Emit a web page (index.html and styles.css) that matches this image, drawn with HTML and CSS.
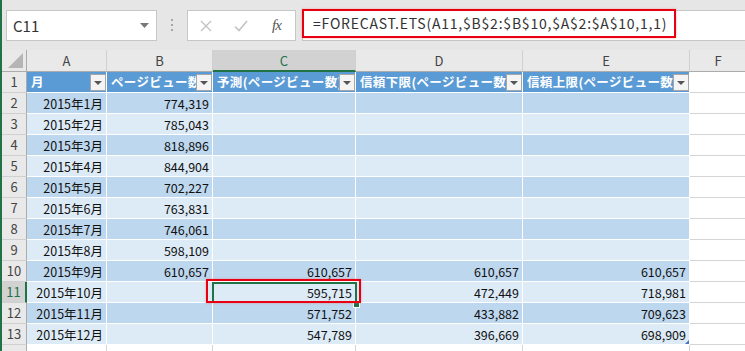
FILE: index.html
```html
<!DOCTYPE html>
<html>
<head>
    <title>FORECAST.ETS</title>
    <link rel="stylesheet" href="styles.css">
</head>
<body>
    <div class="app">
        <div class="formula-bar">
            <div class="name-box">
                <span>C11</span>
                <svg class="caret" width="9" height="5" viewBox="0 0 9 5"><path d="M0 0h9L4.5 5z" fill="#777"/></svg>
            </div>
            <div class="grip">
                <svg width="3" height="13" viewBox="0 0 3 13"><rect x="0" y="0" width="2" height="2" fill="#a6a6a6"/><rect x="0" y="5" width="2" height="2" fill="#a6a6a6"/><rect x="0" y="10" width="2" height="2" fill="#a6a6a6"/></svg>
            </div>
            <div class="fx-box">
                <svg width="12" height="12" viewBox="0 0 12 12"><path d="M1 1l10 10M11 1L1 11" stroke="#c3c3c3" stroke-width="1.4"/></svg>
                <svg width="14" height="12" viewBox="0 0 14 12"><path d="M1 6.5l4 4L13 1" stroke="#c3c3c3" stroke-width="1.6" fill="none"/></svg>
                <span class="fx">fx</span>
            </div>
            <div class="formula">
                <span class="formula-text">=FORECAST.ETS(A11,$B$2:$B$10,$A$2:$A$10,1,1)</span>
            </div>
        </div>

        <div class="sheet">
            <div class="cell corner"><span class="tri"></span></div>
            <div class="cell col-head">A</div>
            <div class="cell col-head">B</div>
            <div class="cell col-head active">C</div>
            <div class="cell col-head">D</div>
            <div class="cell col-head">E</div>
            <div class="cell col-head">F</div>

            <div class="cell row-head">1</div>
            <div class="cell th"><span class="label">月</span><span class="filter"></span></div>
            <div class="cell th"><span class="label">ページビュー数</span><span class="filter"></span></div>
            <div class="cell th"><span class="label">予測(ページビュー数)</span><span class="filter"></span></div>
            <div class="cell th"><span class="label">信頼下限(ページビュー数)</span><span class="filter"></span></div>
            <div class="cell th"><span class="label">信頼上限(ページビュー数)</span><span class="filter"></span></div>
            <div class="cell"></div>

            <div class="cell row-head">2</div>
            <div class="cell band1 num">2015年1月</div>
            <div class="cell band1 num">774,319</div>
            <div class="cell band1 num"></div>
            <div class="cell band1 num"></div>
            <div class="cell band1 num"></div>
            <div class="cell"></div>

            <div class="cell row-head">3</div>
            <div class="cell band2 num">2015年2月</div>
            <div class="cell band2 num">785,043</div>
            <div class="cell band2 num"></div>
            <div class="cell band2 num"></div>
            <div class="cell band2 num"></div>
            <div class="cell"></div>

            <div class="cell row-head">4</div>
            <div class="cell band1 num">2015年3月</div>
            <div class="cell band1 num">818,896</div>
            <div class="cell band1 num"></div>
            <div class="cell band1 num"></div>
            <div class="cell band1 num"></div>
            <div class="cell"></div>

            <div class="cell row-head">5</div>
            <div class="cell band2 num">2015年4月</div>
            <div class="cell band2 num">844,904</div>
            <div class="cell band2 num"></div>
            <div class="cell band2 num"></div>
            <div class="cell band2 num"></div>
            <div class="cell"></div>

            <div class="cell row-head">6</div>
            <div class="cell band1 num">2015年5月</div>
            <div class="cell band1 num">702,227</div>
            <div class="cell band1 num"></div>
            <div class="cell band1 num"></div>
            <div class="cell band1 num"></div>
            <div class="cell"></div>

            <div class="cell row-head">7</div>
            <div class="cell band2 num">2015年6月</div>
            <div class="cell band2 num">763,831</div>
            <div class="cell band2 num"></div>
            <div class="cell band2 num"></div>
            <div class="cell band2 num"></div>
            <div class="cell"></div>

            <div class="cell row-head">8</div>
            <div class="cell band1 num">2015年7月</div>
            <div class="cell band1 num">746,061</div>
            <div class="cell band1 num"></div>
            <div class="cell band1 num"></div>
            <div class="cell band1 num"></div>
            <div class="cell"></div>

            <div class="cell row-head">9</div>
            <div class="cell band2 num">2015年8月</div>
            <div class="cell band2 num">598,109</div>
            <div class="cell band2 num"></div>
            <div class="cell band2 num"></div>
            <div class="cell band2 num"></div>
            <div class="cell"></div>

            <div class="cell row-head">10</div>
            <div class="cell band1 num">2015年9月</div>
            <div class="cell band1 num">610,657</div>
            <div class="cell band1 num">610,657</div>
            <div class="cell band1 num">610,657</div>
            <div class="cell band1 num">610,657</div>
            <div class="cell"></div>

            <div class="cell row-head active">11</div>
            <div class="cell band2 num">2015年10月</div>
            <div class="cell band2 num"></div>
            <div class="cell band2 num current">595,715<span class="sel"><span class="handle"></span></span><span class="mark"></span></div>
            <div class="cell band2 num">472,449</div>
            <div class="cell band2 num">718,981</div>
            <div class="cell"></div>

            <div class="cell row-head">12</div>
            <div class="cell band1 num">2015年11月</div>
            <div class="cell band1 num"></div>
            <div class="cell band1 num">571,752</div>
            <div class="cell band1 num">433,882</div>
            <div class="cell band1 num">709,623</div>
            <div class="cell"></div>

            <div class="cell row-head">13</div>
            <div class="cell band2 num">2015年12月</div>
            <div class="cell band2 num"></div>
            <div class="cell band2 num">547,789</div>
            <div class="cell band2 num">396,669</div>
            <div class="cell band2 num last">698,909<span class="resize"></span></div>
            <div class="cell"></div>

            <div class="cell row-head"></div>
            <div class="cell"></div>
            <div class="cell"></div>
            <div class="cell"></div>
            <div class="cell"></div>
            <div class="cell"></div>
            <div class="cell"></div>
        </div>
    </div>
</body>
</html>
```

FILE: styles.css
```css
body {
    margin: 0;
    font-family: "Noto Sans CJK JP", sans-serif;
}
.app {
    width: 745px;
    height: 351px;
    overflow: hidden;
    box-sizing: border-box;
    border-left: 2px solid #217346;
    background: #fff;
}

/* formula bar */
.formula-bar {
    height: 50px;
    box-sizing: border-box;
    padding-top: 10px;
    display: flex;
    align-items: flex-start;
    background: #e6e6e6;
}
.name-box {
    margin-left: 4px;
    width: 151px;
    height: 31px;
    box-sizing: border-box;
    border: 1px solid #c6c6c6;
    background: #fff;
    display: flex;
    align-items: center;
    justify-content: space-between;
    padding: 0 7px 0 6px;
    font-size: 15px;
    color: #333;
}
.grip {
    width: 30px;
    height: 31px;
    display: flex;
    align-items: center;
    justify-content: center;
}
.fx-box {
    width: 109px;
    height: 31px;
    box-sizing: border-box;
    border: 1px solid #c6c6c6;
    background: #fff;
    display: flex;
    align-items: center;
    gap: 22px;
    padding-left: 12px;
}
.fx {
    font-family: "Liberation Serif", serif;
    font-style: italic;
    font-size: 15px;
    color: #555;
    letter-spacing: -1px;
    margin-left: 2px;
}
.formula {
    flex: 1;
    margin-left: 6px;
    height: 31px;
    box-sizing: border-box;
    border: 1px solid #c6c6c6;
    border-right: none;
    background: #fff;
}
.formula-text {
    display: block;
    width: 374px;
    height: 29px;
    margin: -2px 0 0 -1px;
    box-sizing: border-box;
    border: 2px solid #e60012;
    box-shadow: 0 0 2px rgba(255, 80, 80, 0.5);
    padding-left: 9px;
    font-size: 14px;
    letter-spacing: 0.78px;
    line-height: 25px;
    color: #333;
    white-space: nowrap;
}

/* sheet grid */
.sheet {
    display: grid;
    grid-template-columns: 25px 80px 106px 143px 167px 167px 57px;
    grid-template-rows: 22px repeat(14, 21px);
}
.cell {
    box-sizing: border-box;
    border-right: 1px solid #d4d4d4;
    border-bottom: 1px solid #d4d4d4;
    padding: 0 3px;
    font-size: 12.5px;
    line-height: 20px;
    white-space: nowrap;
    color: #111;
}
.corner {
    background: #e9e9e9;
    border-right-color: #ababab;
    border-bottom-color: #ababab;
    position: relative;
}
.tri {
    position: absolute;
    right: 3px;
    bottom: 3px;
    width: 0;
    height: 0;
    border-left: 15px solid transparent;
    border-bottom: 15px solid #b5b5b5;
}
.col-head {
    background: #e9e9e9;
    text-align: center;
    color: #444;
    border-right-color: #d0d0d0;
    border-bottom-color: #ababab;
    line-height: 21px;
    font-size: 13px;
}
.col-head.active {
    background: #d2d2d2;
    color: #217346;
    border-bottom: 2px solid #217346;
}
.row-head {
    background: #e9e9e9;
    text-align: center;
    color: #444;
    padding: 0;
    border-right-color: #ababab;
    border-bottom-color: #d0d0d0;
    font-size: 13px;
}
.row-head.active {
    background: #d2d2d2;
    color: #217346;
    border-right: 2px solid #217346;
}
.th {
    background: #5b9bd5;
    color: #fff;
    font-weight: bold;
    font-size: 12.5px;
    letter-spacing: 0.35px;
    border-color: #fff;
    display: flex;
    align-items: center;
    padding-left: 4px;
    padding-right: 0;
}
.th .label {
    flex: 1;
    min-width: 0;
    overflow: hidden;
}
.filter {
    flex: none;
    width: 16px;
    height: 17px;
    box-sizing: border-box;
    border: 1px solid #a6a6a6;
    background: #f4f4f4;
    display: flex;
    align-items: center;
    justify-content: center;
    padding-top: 2px;
}
.filter::after {
    content: "";
    border-left: 4px solid transparent;
    border-right: 4px solid transparent;
    border-top: 4px solid #555;
}
.band1 {
    background: #bdd7ee;
    border-color: #fff;
}
.band2 {
    background: #ddebf7;
    border-color: #fff;
}
.num {
    text-align: right;
    padding-top: 1px;
}

/* active cell */
.current {
    position: relative;
}
.sel {
    position: absolute;
    left: -1px;
    top: 0;
    width: 145px;
    height: 21px;
    box-sizing: border-box;
    border: 2px solid #217346;
}
.handle {
    position: absolute;
    left: 139px;
    top: 17px;
    width: 5px;
    height: 5px;
    background: #217346;
    border: 1px solid #fff;
}
.mark {
    position: absolute;
    left: -7px;
    top: -3px;
    width: 155px;
    height: 24px;
    box-sizing: border-box;
    border: 2px solid #e60012;
    box-shadow: 0 0 2px rgba(255, 80, 80, 0.5);
}
.last {
    position: relative;
}
.resize {
    position: absolute;
    right: 0;
    bottom: 0;
    width: 0;
    height: 0;
    border-left: 4px solid transparent;
    border-bottom: 4px solid #4472c4;
}
```
